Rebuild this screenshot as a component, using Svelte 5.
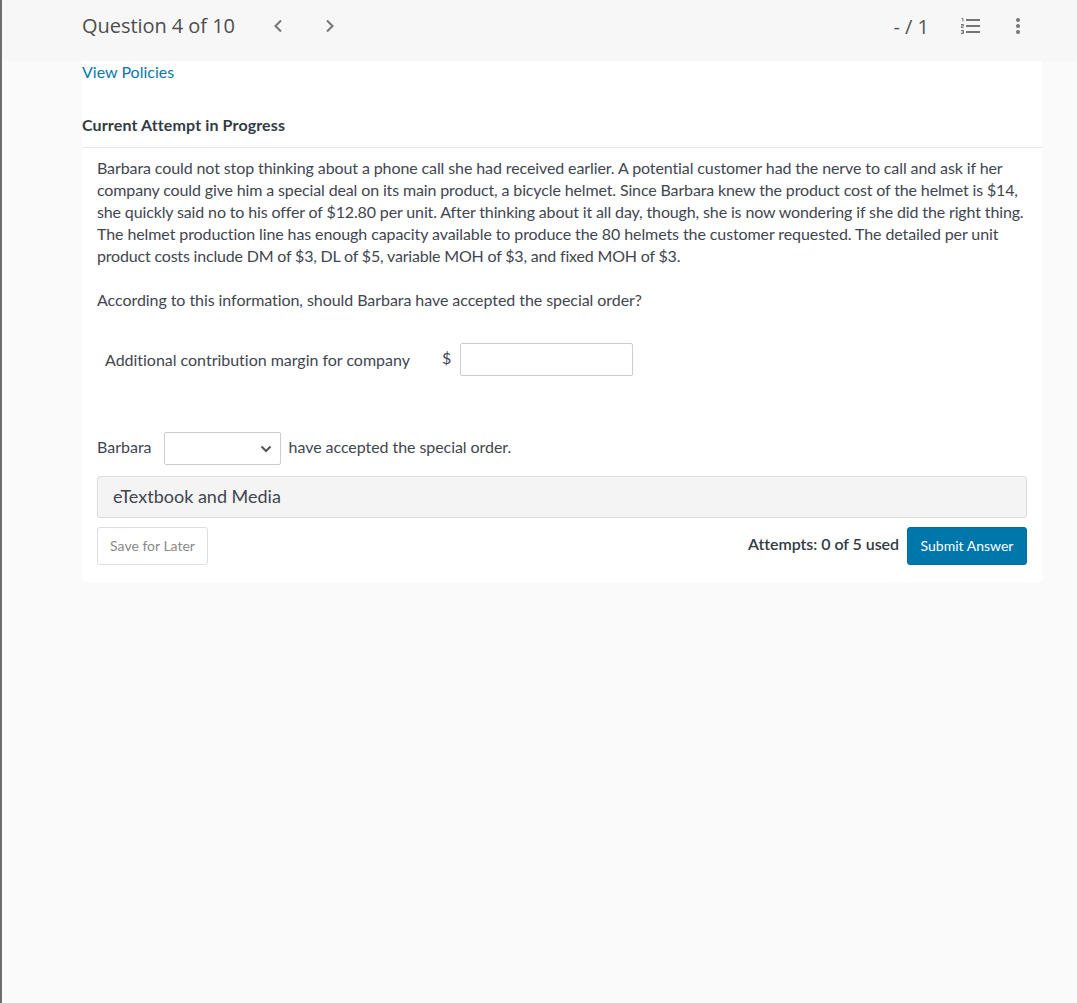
<script lang="ts">
	// tracking per line: the installed Lato runs a bit wider than the reference
	const story = [
		{ text: 'Barbara could not stop thinking about a phone call she had received earlier. A potential customer had the nerve to call and ask if her', tracking: -0.105 },
		{ text: 'company could give him a special deal on its main product, a bicycle helmet. Since Barbara knew the product cost of the helmet is $14,', tracking: -0.135 },
		{ text: 'she quickly said no to his offer of $12.80 per unit. After thinking about it all day, though, she is now wondering if she did the right thing.', tracking: -0.134 },
		{ text: 'The helmet production line has enough capacity available to produce the 80 helmets the customer requested. The detailed per unit', tracking: -0.094 },
		{ text: 'product costs include DM of $3, DL of $5, variable MOH of $3, and fixed MOH of $3.', tracking: -0.183 }
	]
</script>

<!-- MARKUP -------------------------------------------- -->
<div class="page">
	<header class="topbar">
		<h1>Question 4 of 10</h1>
		<nav class="pager">
			<svg width="8" height="14" viewBox="0 0 8 14"><path d="M7 1.500 1.500 7 7 12.500" /></svg>
			<svg width="8" height="14" viewBox="0 0 8 14"><path d="M1 1.500 6.500 7 1 12.500" /></svg>
		</nav>
		<div class="score">- / 1</div>
		<svg class="list" width="20" height="16" viewBox="0 0 20 16">
			<path d="M5 2h14M5 8h14M5 14h14" />
			<path class="num" d="M.5 .5h1.500v3M0 6.500h2.500v1.500h-2.500v1.500h2.500M0 12.500h2.500v3h-2.500M.5 14h2" />
		</svg>
		<svg class="dots" width="6" height="18" viewBox="0 0 6 18">
			<circle cx="3" cy="3" r="2" />
			<circle cx="3" cy="9" r="2" />
			<circle cx="3" cy="15" r="2" />
		</svg>
	</header>

	<main class="card">
		<a class="policies" href="#policies">View Policies</a>
		<h2>Current Attempt in Progress</h2>

		<section class="question">
			<p class="story">
				{#each story as line}
					<span style="letter-spacing: {line.tracking}px">{line.text}</span>
				{/each}
			</p>
			<p class="ask">According to this information, should Barbara have accepted the special order?</p>

			<div class="margin-row">
				<span class="margin-label">Additional contribution margin for company</span>
				<span class="dollar">$</span>
				<input type="text" aria-label="Additional contribution margin" />
			</div>

			<div class="select-row">
				<span>Barbara</span>
				<div class="select">
					<svg width="12" height="8" viewBox="0 0 12 8"><path d="M1.500 1.500 6 6l4.500-4.500" /></svg>
				</div>
				<span class="tail">have accepted the special order.</span>
			</div>

			<div class="media"><span>eTextbook and Media</span></div>

			<div class="actions">
				<button class="save">Save for Later</button>
				<span class="attempts">Attempts: 0 of 5 used</span>
				<button class="submit">Submit Answer</button>
			</div>
		</section>
	</main>
</div>

<!-- CSS ----------------------------------------------- -->
<style>
	:global(body) {
		margin: 0;
		background: #fafafa;
	}

	.page {
		min-height: 1003px;
		box-sizing: border-box;
		border-left: 2px solid #6e6e6e;
		background: #fafafa;
		color: #3f4650;
		font-family: Lato, sans-serif;
		font-size: 16px;
	}

	/* TOPBAR ----------------------------------------------- */
	.topbar {
		height: 61px;
		padding: 0 56px 9px 80px;
		box-sizing: border-box;
		display: flex;
		align-items: center;
		background: #f7f7f7;

		h1 {
			margin: -2px 0 0;
			font-family: 'Open Sans', sans-serif;
			font-size: 20px;
			font-weight: 400;
			letter-spacing: -0.05px;
			color: #4d4d4d;
		}

		svg {
			fill: none;
			stroke: #757575;
		}

		.pager {
			margin-left: 39px;
			display: flex;
			gap: 44px;

			path {
				stroke-width: 2;
			}
		}

		.score {
			margin-left: auto;
			font-family: 'Open Sans', sans-serif;
			font-size: 20px;
			color: #555;
		}

		.list {
			margin-left: 32px;

			path {
				stroke-width: 2;
			}

			.num {
				stroke-width: 1;
			}
		}

		.dots {
			margin-left: 34px;
			fill: #757575;
			stroke: none;
		}
	}

	/* CARD ------------------------------------------------- */
	.card {
		width: 960px;
		height: 521px;
		margin-left: 80px;
		display: flex;
		flex-direction: column;
		background: #fff;

		.policies {
			margin-top: 1px;
			line-height: 20px;
			color: #0a77ab;
			text-decoration: none;
		}

		h2 {
			margin: 32px 0 0;
			padding-bottom: 11px;
			border-bottom: 1px solid #e8e8e8;
			font-size: 16px;
			line-height: 22px;
			font-weight: 700;
			letter-spacing: 0.13px;
			color: #333b45;
		}
	}

	/* QUESTION --------------------------------------------- */
	.question {
		padding: 9px 15px 0;
		display: flex;
		flex-direction: column;
		line-height: 22px;

		p {
			margin: 0;
		}

		.story span {
			display: block;
			white-space: nowrap;
		}

		.ask {
			margin-top: 22px;
			letter-spacing: -0.063px;
		}
	}

	.margin-row {
		margin: 32px 0 0 8px;
		display: flex;
		align-items: center;

		.margin-label {
			width: 337px;
			letter-spacing: -0.02px;
		}

		.dollar {
			width: 18px;
			margin-top: -3px;
		}

		input {
			width: 173px;
			height: 33px;
			padding: 0;
			box-sizing: border-box;
			background: #fff;
			border: 1px solid #ccc;
			border-radius: 2px;
		}
	}

	.select-row {
		margin-top: 56px;
		display: flex;
		align-items: center;
		gap: 12px;

		span {
			margin-top: -3px;
		}

		.select {
			width: 117px;
			height: 33px;
			padding-right: 8px;
			box-sizing: border-box;
			display: flex;
			align-items: center;
			justify-content: flex-end;
			background: #fff;
			border: 1px solid #ccc;
			border-radius: 2px;
		}

		.tail {
			margin-left: -4px;
			letter-spacing: -0.06px;
		}

		svg {
			fill: none;
			stroke: #555;
			stroke-width: 2;
		}
	}

	.media {
		height: 42px;
		margin-top: 11px;
		padding: 0 0 2px 15px;
		box-sizing: border-box;
		display: flex;
		align-items: center;
		background: #f4f4f4;
		border: 1px solid #ddd;
		border-radius: 3px;
		font-size: 18px;
		color: #3f4650;
	}

	/* ACTIONS ---------------------------------------------- */
	.actions {
		margin-top: 9px;
		display: flex;
		align-items: center;

		button {
			height: 38px;
			border-radius: 3px;
			font-family: Lato, sans-serif;
			font-size: 14px;
		}

		.save {
			width: 111px;
			padding: 0 0 2px;
			background: #fff;
			border: 1px solid #ddd;
			color: #8a8a8a;
		}

		.attempts {
			margin: -5px 8px 0 auto;
			font-weight: 600;
			letter-spacing: -0.05px;
			color: #333b45;
		}

		.submit {
			width: 120px;
			padding: 0 0 2px;
			background: #0077aa;
			border: 1px solid #006c9c;
			color: #fff;
		}
	}
</style>
